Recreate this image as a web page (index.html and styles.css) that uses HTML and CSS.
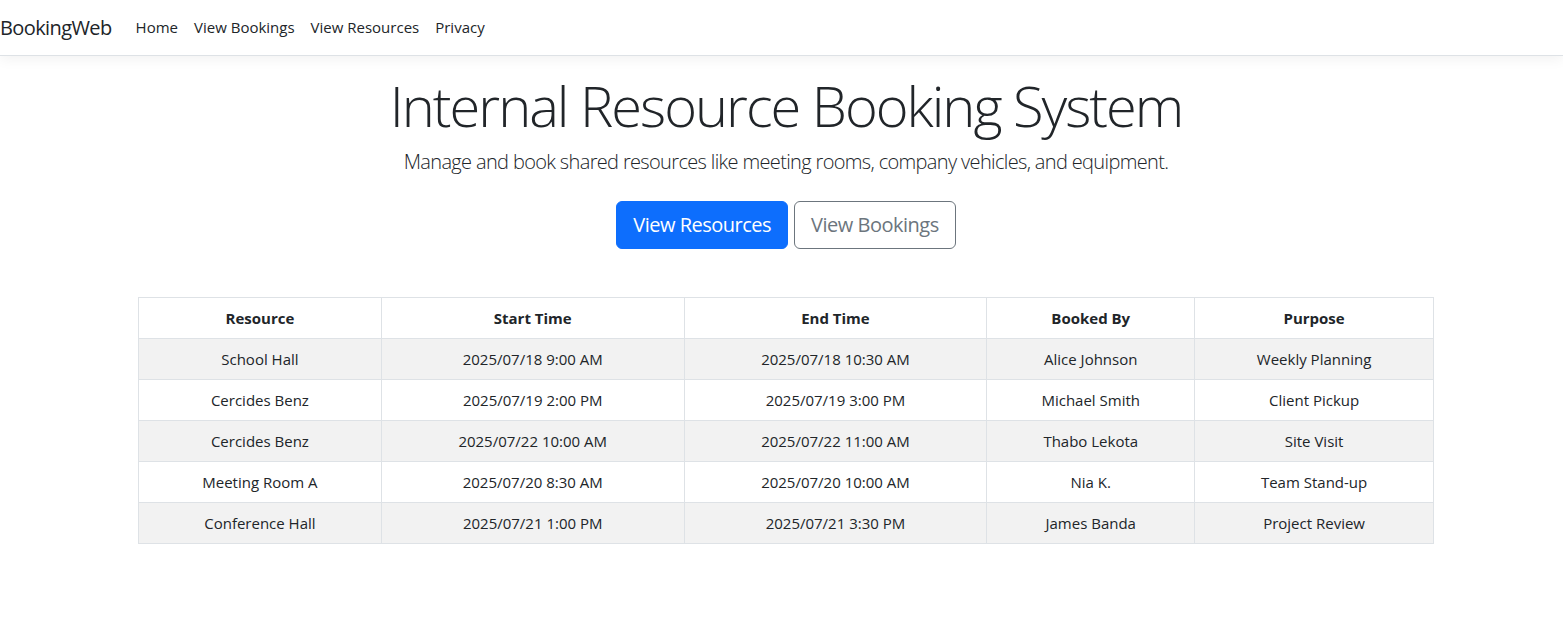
FILE: index.html
```html
<!DOCTYPE html>
<html lang="en">
<head>
<meta charset="utf-8">
<title>BookingWeb</title>
<link rel="stylesheet" href="styles.css">
</head>
<body>
<header class="navbar">
  <a class="brand" href="#">BookingWeb</a>
  <nav class="nav">
    <a class="nav-link" href="#">Home</a>
    <a class="nav-link" href="#">View Bookings</a>
    <a class="nav-link" href="#">View Resources</a>
    <a class="nav-link" href="#">Privacy</a>
  </nav>
</header>
<main class="container">
  <section class="hero">
    <h1 class="display">Internal Resource Booking System</h1>
    <p class="lead">Manage and book shared resources like meeting rooms, company vehicles, and equipment.</p>
    <div class="actions">
      <a class="btn btn-primary" href="#">View Resources</a>
      <a class="btn btn-outline" href="#">View Bookings</a>
    </div>
  </section>
  <table class="table">
    <colgroup>
      <col class="c1"><col class="c2"><col class="c3"><col class="c4"><col class="c5">
    </colgroup>
    <thead>
      <tr><th>Resource</th><th>Start Time</th><th>End Time</th><th>Booked By</th><th>Purpose</th></tr>
    </thead>
    <tbody>
      <tr><td>School Hall</td><td>2025/07/18 9:00 AM</td><td>2025/07/18 10:30 AM</td><td>Alice Johnson</td><td>Weekly Planning</td></tr>
      <tr><td>Cercides Benz</td><td>2025/07/19 2:00 PM</td><td>2025/07/19 3:00 PM</td><td>Michael Smith</td><td>Client Pickup</td></tr>
      <tr><td>Cercides Benz</td><td>2025/07/22 10:00 AM</td><td>2025/07/22 11:00 AM</td><td>Thabo Lekota</td><td>Site Visit</td></tr>
      <tr><td>Meeting Room A</td><td>2025/07/20 8:30 AM</td><td>2025/07/20 10:00 AM</td><td>Nia K.</td><td>Team Stand-up</td></tr>
      <tr><td>Conference Hall</td><td>2025/07/21 1:00 PM</td><td>2025/07/21 3:30 PM</td><td>James Banda</td><td>Project Review</td></tr>
    </tbody>
  </table>
</main>
</body>
</html>
```

FILE: styles.css
```css
* { box-sizing: border-box; }
html, body { margin: 0; padding: 0; background: #fff; }
body {
  font-family: "Open Sans", "Noto Sans", "Liberation Sans", sans-serif;
  font-size: 16px;
  line-height: 1.5;
  color: #212529;
}
a { text-decoration: none; color: inherit; }

.navbar {
  display: flex;
  align-items: center;
  height: 56px;
  border-bottom: 1px solid #dee2e6;
  box-shadow: 0 4px 12px rgba(0,0,0,.05);
}
.brand {
  font-size: 20px;
  letter-spacing: -0.6px;
  color: #212529;
  margin-right: 16px;
  line-height: 30px;
}
.nav { display: flex; }
.nav-link {
  padding: 8px;
  font-size: 15px;
  color: #212529;
}

.container {
  width: 1296px;
  margin-left: 138px;
  padding-top: 16px;
}
.hero { text-align: center; }
.display {
  font-size: 56px;
  font-weight: 300;
  letter-spacing: -2px;
  line-height: 1.2;
  margin: 0 0 8px;
}
.lead {
  font-size: 20px;
  font-weight: 300;
  letter-spacing: -0.65px;
  margin: 0 0 24px;
}
.actions {
  display: flex;
  justify-content: center;
  gap: 6px;
}
.btn {
  display: inline-block;
  font-size: 20px;
  letter-spacing: -0.5px;
  line-height: 30px;
  padding: 8px 16px;
  border-radius: 6px;
  border: 1px solid transparent;
}
.btn-primary { background: #0d6efd; border-color: #0d6efd; color: #fff; }
.btn-outline { border-color: #6c757d; color: #6c757d; background: #fff; }

.table {
  width: 1296px;
  margin-top: 48px;
  border-collapse: collapse;
  text-align: center;
}
.c1 { width: 243px; }
.c2 { width: 303px; }
.c3 { width: 303px; }
.c4 { width: 208px; }
.c5 { width: 239px; }
.table th, .table td {
  border: 1px solid #dee2e6;
  padding: 8px;
  height: 41px;
  font-size: 15px;
}
.table th { font-weight: 700; }
.table tbody tr:nth-child(odd) td { background: #f2f2f2; }
```
